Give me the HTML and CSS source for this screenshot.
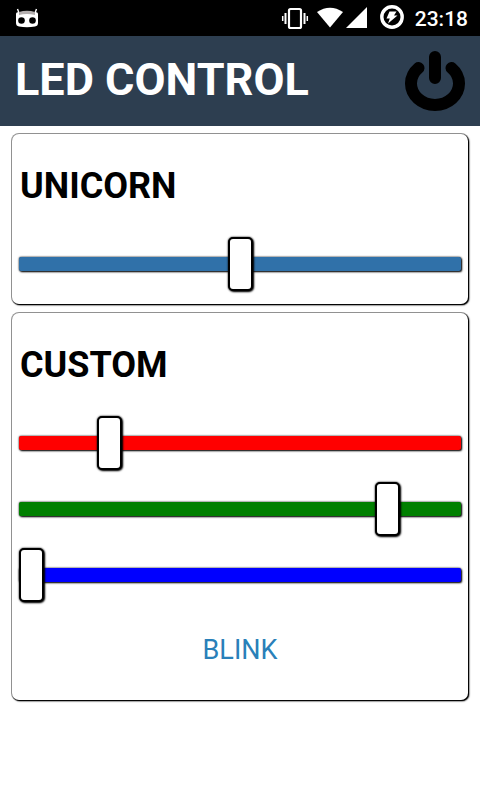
FILE: index.html
```html
<!DOCTYPE html>
<html lang="en">
<head>
<meta charset="utf-8">
<meta name="viewport" content="width=device-width, initial-scale=1">
<title>LED CONTROL</title>
<link rel="stylesheet" href="styles.css">
</head>
<body>
<div class="status">
  <svg class="robot" width="24" height="20" viewBox="0 0 24 20" aria-hidden="true">
    <path d="M2.500 1l1.500 4M21.500 1l-1.500 4" stroke="#fff" stroke-width="1.400"/>
    <path d="M1 6Q1 4 4 4H20Q23 4 23 6V15Q23 18 20 18.500Q12 20 4 18.500Q1 18 1 15z" fill="#fff"/>
    <path d="M4 4Q12 1.500 20 4V7Q12 5 4 7z" fill="#b5b0b0"/>
    <circle cx="6.500" cy="12.500" r="3.300"/><circle cx="17.500" cy="12.500" r="3.300"/>
  </svg>
  <div class="indicators">
    <svg width="88" height="26" viewBox="0 0 88 26" aria-hidden="true">
      <g fill="none" stroke="#fff">
        <rect x="8" y="4" width="12" height="19" rx="1.500" stroke-width="2.200"/>
        <path d="M4.500 8v11M23.500 8v11" stroke-width="2"/>
        <path d="M1.700 11v5M26.300 11v5" stroke-width="1.500"/>
      </g>
      <path d="M36 7Q49-1.500 62 7L49 22.500z" fill="#fff"/>
      <path d="M65 23L86 2V23z" fill="#fff"/>
    </svg>
    <svg width="24" height="26" viewBox="0 0 24 26" aria-hidden="true">
      <circle cx="12" cy="12" r="10.200" fill="none" stroke="#fff" stroke-width="3.400"/>
      <path d="M9.500 6.500h7l-2.500 4h3.500L8 18.500l1.800-5H6.500z" fill="#fff"/>
    </svg>
    <time class="clock">23:18</time>
  </div>
</div>
<header class="header">
  <h1>LED CONTROL</h1>
  <button class="power" type="button" aria-label="Power">
    <svg width="60" height="60" viewBox="0 0 60 60" aria-hidden="true">
      <path d="M30 6V27M13.500 17A24 21.400 0 1 0 46.500 17" fill="none" stroke="#000" stroke-width="12" stroke-linecap="round"/>
    </svg>
  </button>
</header>
<main class="panels">
  <section class="card">
    <h2 id="unicorn">UNICORN</h2>
    <input class="slider steel" type="range" min="0" max="255" step="any" value="127.5" aria-labelledby="unicorn">
  </section>
  <section class="card">
    <h2>CUSTOM</h2>
    <input class="slider red" type="range" min="0" max="255" value="48" aria-label="Red">
    <input class="slider green" type="range" min="0" max="255" value="218" aria-label="Green">
    <input class="slider blue" type="range" min="0" max="255" value="0" aria-label="Blue">
    <button class="blink" type="button">BLINK</button>
  </section>
</main>
</body>
</html>
```
FILE: styles.css
```css
* { box-sizing: border-box; }
body { margin: 0; background: #fff; color: #000; font-family: Roboto, sans-serif; }
button { padding: 0; border: 0; background: none; font-family: inherit; cursor: pointer; }
svg { display: block; }

.status {
  display: flex;
  align-items: center;
  justify-content: space-between;
  height: 36px;
  padding: 0 12px 0 15px;
  background: #000;
}
.indicators { display: flex; align-items: center; gap: 11px; }
.clock { padding-top: 2px; color: #fff; font-size: 21px; font-weight: 500; line-height: 34px; }

.header {
  display: flex;
  align-items: center;
  justify-content: space-between;
  height: 90px;
  padding: 0 15px;
  background: #2d3e50;
}
.header h1 { margin: 0; padding-bottom: 2px; color: #fff; font-size: 45px; font-weight: 700; line-height: 86px; }

.panels { display: grid; gap: 9px; padding: 8px 12px; }
.card {
  display: flex;
  flex-direction: column;
  gap: 12px;
  padding: 31px 7px 13px;
  border-radius: 7px;
  background: #fff;
  box-shadow: 1px 1px 1px #000, 1px 1px 2px #000, 0 0 0 1px #999;
}
.card h2 { margin: 0 1px 18px; font-size: 36px; font-weight: 700; line-height: 42px; }

.slider {
  appearance: none;
  display: block;
  width: 100%;
  height: 54px;
  margin: 0;
  background: none;
}
.slider::-webkit-slider-runnable-track {
  height: 14px;
  border-radius: 2px;
  background: var(--track);
  box-shadow: 1px 1px 2px #000, 0 0 2px #0d0d0d;
}
.slider::-webkit-slider-thumb {
  appearance: none;
  width: 25px;
  height: 54px;
  margin-top: -20px;
  border: 2px solid #000;
  border-radius: 5px;
  background: #fff;
  box-shadow: 1px 1px 2px #000, 0 0 2px #0d0d0d;
}
.steel { --track: #3071a9; }
.red { --track: #f00; }
.green { --track: #008000; }
.blue { --track: #00f; }

.blink { align-self: center; height: 73px; padding-bottom: 2px; color: #2980b9; font-size: 27px; line-height: 70px; }
```
